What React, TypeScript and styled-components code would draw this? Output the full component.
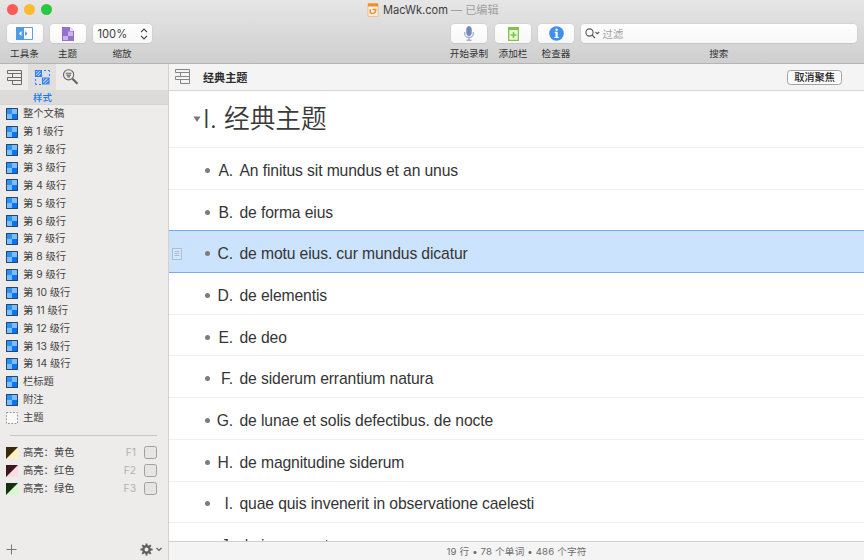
import React from "react";
import styled, { createGlobalStyle } from "styled-components";

const Global = createGlobalStyle`
  * { box-sizing: border-box; }
  body { margin: 0; overflow: hidden; font-family: Inter, "Noto Sans CJK SC", sans-serif; color: #3c3c3c; }
  svg { display: block; flex: none; }
`;

const Window = styled.div`
  width: 864px;
  height: 560px;
  display: flex;
  flex-direction: column;
  overflow: hidden;
  background: #fff;
`;

const Header = styled.header`
  height: 64px;
  flex: none;
  background: linear-gradient(#e6e6e6, #cfcfcf);
  border-bottom: 1px solid #b4b4b4;
`;

const TitleBar = styled.div`
  height: 20px;
  display: grid;
  grid-template-columns: 1fr auto 1fr;
  align-items: center;
  padding-left: 6.5px;
  padding-right: 5px;
`;

const Lights = styled.div`
  display: flex;
  gap: 6px;
  padding-bottom: 2px;
`;

const Light = styled.span<{ $color: string }>`
  width: 11px;
  height: 11px;
  border-radius: 50%;
  background: ${(p) => p.$color};
`;

const Title = styled.div`
  display: flex;
  align-items: center;
  gap: 4px;
  padding-bottom: 1px;
  font-size: 11.1px;
  line-height: 16px;
  white-space: nowrap;
`;

const Edited = styled.span`
  color: #a0a0a0;
`;

const Toolbar = styled.div`
  display: flex;
  padding: 4px 7px 0 6.5px;
  height: 43px;
`;

const Tool = styled.div<{ $w: number; $gap?: number }>`
  width: ${(p) => p.$w}px;
  margin-right: ${(p) => p.$gap ?? 0}px;
  display: flex;
  flex-direction: column;
  align-items: center;
`;

const ToolButton = styled.div`
  width: 100%;
  height: 19px;
  display: flex;
  align-items: center;
  justify-content: center;
  background: linear-gradient(#fff, #f7f7f7);
  border-radius: 4px;
  box-shadow: 0 0 0 0.5px #cacaca, 0 0.5px 0.5px #b4b4b4;
`;

const ZoomValue = styled(ToolButton)`
  justify-content: space-between;
  padding: 1px 4px 0 5px;
  font-size: 11.2px;
`;

const SearchField = styled(ToolButton)`
  justify-content: flex-start;
  padding-left: 4px;
  gap: 3px;
  font-size: 10.4px;
  color: #a0a0a0;
`;

const ToolLabel = styled.span`
  margin-top: 4px;
  font-size: 9.6px;
  line-height: 14px;
  white-space: nowrap;
  color: #333;
`;

const Body = styled.div`
  flex: 1;
  min-height: 0;
  display: flex;
`;

const Sidebar = styled.aside`
  width: 169px;
  flex: none;
  display: flex;
  flex-direction: column;
  background: #edecea;
  border-right: 1px solid #d2d2d2;
`;

const Tabs = styled.div`
  height: 26px;
  display: flex;
`;

const Tab = styled.div<{ $active?: boolean }>`
  width: 28px;
  display: flex;
  align-items: center;
  justify-content: center;
  background: ${(p) => (p.$active ? "#e0dfde" : "transparent")};
`;

const TabCaption = styled.div`
  height: 15px;
  padding-left: 33px;
  background: #dcdbda;
  border-bottom: 1px solid #d6d5d4;
  font-size: 9.4px;
  line-height: 15px;
  font-weight: 500;
  color: #1478fb;
`;

const StyleList = styled.div`
  display: flex;
  flex-direction: column;
`;

const StyleRow = styled.div`
  height: 17.86px;
  padding: 0 11px 0 6px;
  display: flex;
  align-items: center;
  font-size: 10.3px;
  line-height: 14px;
  white-space: nowrap;
  color: #444;
`;

const RowName = styled.span`
  margin-left: 5px;
  padding-bottom: 1px;
  flex: 1;
`;

const Divider = styled.div`
  height: 1px;
  flex: none;
  margin: 8.3px 11px 8.3px 10px;
  background: #c6c6c5;
`;

const KeyHint = styled.span`
  color: #b2b2b2;
  margin-right: 8px;
  padding-bottom: 2px;
`;

const Check = styled.span`
  width: 13px;
  height: 13px;
  border: 1px solid #a0a0a0;
  border-radius: 2.5px;
  background: #e6e5e4;
`;

const SideFooter = styled.div`
  margin-top: auto;
  height: 22px;
  padding: 0 6px 0 6px;
  display: flex;
  align-items: center;
  justify-content: space-between;
`;

const Actions = styled.div`
  display: flex;
  align-items: center;
  gap: 3px;
`;

const Main = styled.main`
  flex: 1;
  min-width: 0;
  display: flex;
  flex-direction: column;
`;

const FocusBar = styled.div`
  height: 27px;
  flex: none;
  display: flex;
  align-items: center;
  padding: 0 22px 1px 5px;
  background: #f4f4f4;
  border-bottom: 1px solid #d5d5d5;
`;

const FocusTitle = styled.span`
  margin-left: 12px;
  flex: 1;
  font-size: 11.1px;
  font-weight: 700;
  color: #2c2c2c;
`;

const FocusButton = styled.span`
  width: 55px;
  height: 15px;
  margin-top: 1px;
  border: 1px solid #a3a3a3;
  border-radius: 3.5px;
  background: #fbfbfb;
  font-size: 10.2px;
  font-weight: 500;
  line-height: 13.5px;
  text-align: center;
  white-space: nowrap;
  color: #222;
`;

const Outline = styled.div`
  flex: 1;
  min-height: 0;
  overflow: hidden;
`;

const Heading = styled.div`
  height: 57px;
  display: flex;
  align-items: center;
  padding-left: 24px;
  border-bottom: 1px solid #f0f0f0;
  font-family: Inter, "Noto Sans CJK SC", sans-serif;
  font-size: 25.7px;
  font-weight: 350;
  line-height: 40px;
  color: #3a3a3a;
`;

const Numeral = styled.span`
  margin-left: 2px;
  width: 21px;
`;

const Item = styled.div<{ $selected?: boolean }>`
  height: 41.7px;
  display: flex;
  align-items: center;
  padding: 4px 0 0 3px;
  font-family: "Liberation Sans", sans-serif;
  font-size: 15.7px;
  letter-spacing: -0.12px;
  color: #353535;
  white-space: nowrap;
  background: ${(p) => (p.$selected ? "#cce3fe" : "#fff")};
  border-bottom: 1px solid ${(p) => (p.$selected ? "#78a8f5" : "#f0f0f0")};
  box-shadow: ${(p) => (p.$selected ? "0 -1px 0 #78a8f5" : "none")};
`;

const NoteSlot = styled.span`
  width: 33px;
`;

const Bullet = styled.span`
  width: 5px;
  height: 5px;
  border-radius: 50%;
  background: #7c7c7c;
`;

const Letter = styled.span`
  width: 23px;
  margin-right: 6.5px;
  padding-top: 1px;
  text-align: right;
`;

const Words = styled.span`
  flex: 1;
  padding-top: 1px;
`;

const Status = styled.footer`
  height: 19px;
  flex: none;
  display: flex;
  align-items: center;
  justify-content: center;
  background: #f4f4f4;
  border-top: 1px solid #d0d0d0;
  font-size: 9.6px;
  letter-spacing: 0.18px;
  color: #6c6c6c;
`;

const OutlineIcon = ({ color = "#6b6b6b" }: { color?: string }) => (
  <svg width="17" height="17" viewBox="0 0 17 17" fill="none" stroke={color} strokeWidth="1">
    <path d="M1.5 1.5H15.5V15.5H6.5V11.5M1.5 1.5V4.5H15.5M6.5 4.5V8M1.5 8.5H15.5M1.5 8.5V11.5H15.5" />
  </svg>
);

const TilesIcon = () => (
  <svg width="17" height="17" viewBox="0 0 17 17" fill="none" stroke="#2b82f6" strokeWidth="1.1">
    <path d="M1.5 1.5H7.5V7.5H1.5ZM8.5 9H15V15H8.5ZM1.5 5L5 1.5M2 7.5L7.5 2M5 7.5L7.5 5M8.5 12.5L12 9M9 15L15 9.5M12 15L15 12" />
    <path d="M10 1.5H12M14 1.5H15.5V3M15.5 5V7M1.5 10V12M1.5 13.5V15.5H3M5 15.5H7" strokeWidth="1" />
  </svg>
);

const FindIcon = () => (
  <svg width="17" height="17" viewBox="0 0 17 17" fill="none" stroke="#666" strokeWidth="1.1">
    <circle cx="6.6" cy="5.8" r="5.1" />
    <path d="M3.7 4.3H9.5M4.3 6.1H9M5.3 7.9H8" />
    <path d="M10.4 9.7L15.5 14.7" strokeWidth="2.2" />
  </svg>
);

const StyleIcon = () => (
  <svg width="12" height="12" viewBox="0 0 12 12">
    <path fill="#0875f5" d="M0 0H12V12H0Z" />
    <path fill="#2794fc" d="M1 1H6V6H1Z" />
    <path fill="#7dbdff" d="M6 1H11V6H6ZM1 6H6V11H1Z" />
    <path fill="none" stroke="#2a4666" d="M.5 .5H11.5V11.5H.5Z" />
  </svg>
);

const ThemeIcon = () => (
  <svg width="12" height="12" viewBox="0 0 12 12">
    <path fill="#f8f8f8" stroke="#969696" strokeDasharray="1.8 1.5" d="M.5 .5H11.5V11.5H.5Z" />
  </svg>
);

const Swatch = ({ dark, light }: { dark: string; light: string }) => (
  <svg width="12" height="12" viewBox="0 0 12 12">
    <path fill={light} d="M0 0H12V12H0Z" />
    <path fill={dark} d="M0 0H12L0 12Z" />
  </svg>
);

const GearIcon = () => (
  <svg width="13" height="13" viewBox="0 0 13 13" fill="none" stroke="#606060">
    <circle cx="6.5" cy="6.5" r="3.2" strokeWidth="2.4" />
    <path strokeWidth="1.9" d="M6.5 .4V3M6.5 10V12.6M.4 6.5H3M10 6.5H12.6M2.2 2.2L4 4M9 9L10.8 10.8M10.8 2.2L9 4M4 9L2.2 10.8" />
  </svg>
);

const DocIcon = () => (
  <svg width="12" height="14" viewBox="0 0 12 14">
    <path fill="#fff6ec" stroke="#efa862" strokeWidth=".7" d="M1 .7H11V13.3H1Z" />
    <path fill="#f58b22" d="M1 .5H11V3.5H1Z" />
    <path fill="none" stroke="#f58b22" strokeWidth="1.5" d="M3.2 6.3V8.6Q3.2 10.6 5.2 10.6Q8.6 10.6 8.8 6.5H5.5" />
  </svg>
);

const levels = Array.from({ length: 14 }, (_, i) => `第 ${i + 1} 级行`);
const styles = ["整个文稿", ...levels, "栏标题", "附注"];

const highlights = [
  { name: "高亮：黄色", key: "F1", dark: "#3b290b", light: "#fff0c2" },
  { name: "高亮：红色", key: "F2", dark: "#3b171f", light: "#ffdce3" },
  { name: "高亮：绿色", key: "F3", dark: "#17300f", light: "#d5f9d0" },
];

const items: [string, string][] = [
  ["A.", "An finitus sit mundus et an unus"],
  ["B.", "de forma eius"],
  ["C.", "de motu eius. cur mundus dicatur"],
  ["D.", "de elementis"],
  ["E.", "de deo"],
  ["F.", "de siderum errantium natura"],
  ["G.", "de lunae et solis defectibus. de nocte"],
  ["H.", "de magnitudine siderum"],
  ["I.", "quae quis invenerit in observatione caelesti"],
  ["J.", "de incremento"],
];

export default function App() {
  return (
    <Window>
      <Global />
      <Header>
        <TitleBar>
          <Lights>
            <Light $color="#fc5b57" />
            <Light $color="#fcbb2f" />
            <Light $color="#28c840" />
          </Lights>
          <Title>
            <DocIcon />
            <span>MacWk.com <Edited>— 已编辑</Edited></span>
          </Title>
        </TitleBar>
        <Toolbar>
          <Tool $w={36} $gap={7}>
            <ToolButton>
              <svg width="17" height="13" viewBox="0 0 17 13">
                <path fill="#fff" stroke="#5aa0e6" d="M.5 .5H16.5V12.5H.5Z" />
                <path fill="#4f9be8" d="M0 0H8V13H0Z" />
                <path fill="#fff" d="M5.5 4V9L3 6.5Z" />
                <path fill="#4f9be8" d="M9 4V9L11.5 6.5Z" />
              </svg>
            </ToolButton>
            <ToolLabel>工具条</ToolLabel>
          </Tool>
          <Tool $w={36} $gap={7}>
            <ToolButton>
              <svg width="12" height="14" viewBox="0 0 12 14">
                <path fill="#9670cf" d="M0 0H8L12 4V14H0Z" />
                <path fill="#c9b3ea" d="M6 4.5H11V9H6ZM1 9H6V13H1Z" />
                <path fill="#e9dff7" d="M8 0V4H12Z" />
              </svg>
            </ToolButton>
            <ToolLabel>主题</ToolLabel>
          </Tool>
          <Tool $w={59} $gap={299.5}>
            <ZoomValue>
              100%
              <svg width="8" height="12" viewBox="0 0 8 12" fill="none" stroke="#444" strokeWidth="1.2">
                <path d="M1 4.2L4 1.2L7 4.2M1 7.8L4 10.8L7 7.8" />
              </svg>
            </ZoomValue>
            <ToolLabel>缩放</ToolLabel>
          </Tool>
          <Tool $w={36} $gap={8}>
            <ToolButton>
              <svg width="10" height="15" viewBox="0 0 10 15" fill="none" stroke="#8a96b0">
                <rect x="2.8" y=".6" width="4.4" height="9" rx="2.2" fill="#6d89c4" stroke="#7a8fbe" />
                <path d="M.8 6V8Q.8 11.4 5 11.4Q9.2 11.4 9.2 8V6M5 11.4V14M2.5 14.2H7.5" />
              </svg>
            </ToolButton>
            <ToolLabel>开始录制</ToolLabel>
          </Tool>
          <Tool $w={36} $gap={7}>
            <ToolButton>
              <svg width="11" height="14" viewBox="0 0 11 14" fill="none" stroke="#80c24c">
                <path fill="#eaf7df" d="M.7 .7H10.3V13.3H.7Z" strokeWidth="1.3" />
                <path d="M0 1.5H11" strokeWidth="3" />
                <path d="M5.5 5V11M2.5 8H8.5" strokeWidth="1.6" />
              </svg>
            </ToolButton>
            <ToolLabel>添加栏</ToolLabel>
          </Tool>
          <Tool $w={36} $gap={6.5}>
            <ToolButton>
              <svg width="15" height="15" viewBox="0 0 15 15">
                <circle cx="7.5" cy="7.5" r="7.3" fill="#3f8eea" />
                <circle cx="7.6" cy="3.7" r="1.2" fill="#fff" />
                <path fill="#fff" d="M5.5 5.7H8.7V11H9.8V12H5.3V11H6.5V6.7H5.5Z" />
              </svg>
            </ToolButton>
            <ToolLabel>检查器</ToolLabel>
          </Tool>
          <Tool $w={276.5}>
            <SearchField>
              <svg width="15" height="11" viewBox="0 0 15 11" fill="none" stroke="#555" strokeWidth="1.1">
                <circle cx="4.5" cy="4.5" r="3.6" />
                <path d="M7 7L10 10M10.5 4L12.3 5.7L14.2 4" />
              </svg>
              过滤
            </SearchField>
            <ToolLabel>搜索</ToolLabel>
          </Tool>
        </Toolbar>
      </Header>
      <Body>
        <Sidebar>
          <Tabs>
            <Tab><OutlineIcon /></Tab>
            <Tab $active><TilesIcon /></Tab>
            <Tab><FindIcon /></Tab>
          </Tabs>
          <TabCaption>样式</TabCaption>
          <StyleList>
            {styles.map((name) => (
              <StyleRow key={name}><StyleIcon /><RowName>{name}</RowName></StyleRow>
            ))}
            <StyleRow><ThemeIcon /><RowName>主题</RowName></StyleRow>
          </StyleList>
          <Divider />
          <StyleList>
            {highlights.map((h) => (
              <StyleRow key={h.key}>
                <Swatch dark={h.dark} light={h.light} />
                <RowName>{h.name}</RowName>
                <KeyHint>{h.key}</KeyHint>
                <Check />
              </StyleRow>
            ))}
          </StyleList>
          <SideFooter>
            <svg width="11" height="11" viewBox="0 0 11 11" stroke="#777"><path d="M5.5 .5V10.5M.5 5.5H10.5" /></svg>
            <Actions>
              <GearIcon />
              <svg width="6" height="5" viewBox="0 0 6 5" fill="none" stroke="#606060" strokeWidth="1.2"><path d="M.5 1L3 3.5L5.5 1" /></svg>
            </Actions>
          </SideFooter>
        </Sidebar>
        <Main>
          <FocusBar>
            <OutlineIcon color="#858585" />
            <FocusTitle>经典主题</FocusTitle>
            <FocusButton>取消聚焦</FocusButton>
          </FocusBar>
          <Outline>
            <Heading>
              <svg width="8" height="7" viewBox="0 0 8 7"><path fill="#777" d="M.5 .5H7.5L4 6Z" /></svg>
              <Numeral>I.</Numeral>
              经典主题
            </Heading>
            {items.map(([letter, words]) => (
              <Item key={letter} $selected={letter === "C."}>
                <NoteSlot>
                  {letter === "C." && (
                    <svg width="10" height="12" viewBox="0 0 10 12" fill="none" stroke="#a8bcd6">
                      <path fill="#d6e7fb" d="M.5 .5H9.5V11.5H.5Z" />
                      <path d="M2.5 3.5H7.5M2.5 5.5H7.5M2.5 7.5H7.5" />
                    </svg>
                  )}
                </NoteSlot>
                <Bullet />
                <Letter>{letter}</Letter>
                <Words>{words}</Words>
              </Item>
            ))}
          </Outline>
          <Status>19 行 • 78 个单词 • 486 个字符</Status>
        </Main>
      </Body>
    </Window>
  );
}
